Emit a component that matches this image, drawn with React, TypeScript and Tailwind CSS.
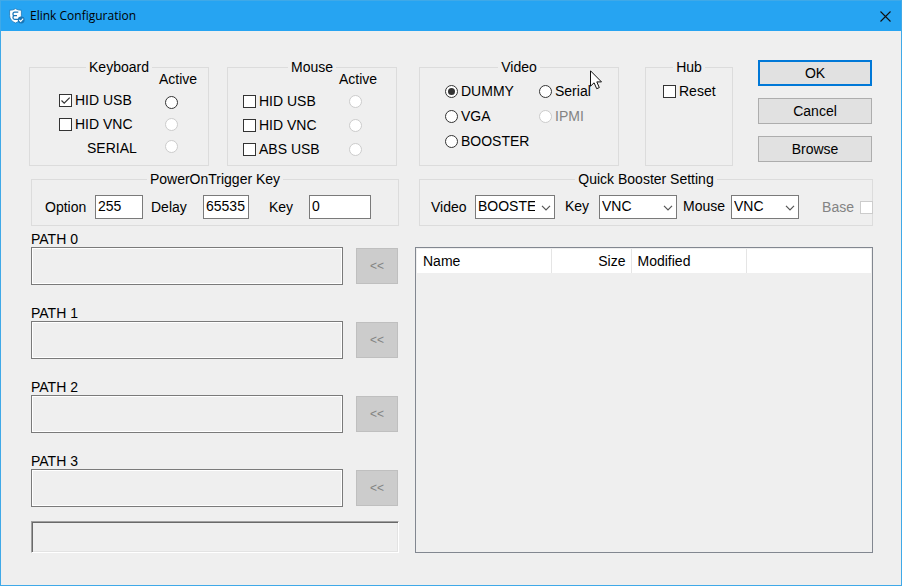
import { useId, type ReactNode } from "react";

const boxBase =
  "relative size-[13px] shrink-0 appearance-none border bg-white border-[#333333] disabled:border-[#cccccc]";

function Group({ title, className, children }: { title: string; className?: string; children: ReactNode }) {
  return (
    <fieldset className={`relative min-w-0 border border-[#dcdcdc] ${className ?? ""}`}>
      <legend className="mx-auto px-[3px] leading-[14px]">{title}</legend>
      {children}
    </fieldset>
  );
}

function Check({ label, checked, disabled }: { label: string; checked?: boolean; disabled?: boolean }) {
  return (
    <label className="flex h-4 items-center gap-[3px] whitespace-nowrap">
      <span className="relative flex">
        <input type="checkbox" defaultChecked={checked} disabled={disabled} className={`peer ${boxBase}`} />
        <svg
          viewBox="0 0 13 13"
          className="pointer-events-none absolute inset-0 hidden size-[13px] peer-checked:block"
          fill="none"
          stroke="#333"
          strokeWidth="1.2"
        >
          <path d="M2.5 6.5 5.2 9.2 10.7 3.7" />
        </svg>
      </span>
      <span>{label}</span>
    </label>
  );
}

function RadioDot({
  name,
  checked,
  disabled,
  label,
}: {
  name: string;
  checked?: boolean;
  disabled?: boolean;
  label?: string;
}) {
  return (
    <span className="relative flex">
      <input
        type="radio"
        name={name}
        aria-label={label}
        defaultChecked={checked}
        disabled={disabled}
        className={`peer rounded-full ${boxBase}`}
      />
      <span className="pointer-events-none absolute top-[3px] left-[3px] hidden size-[7px] rounded-full bg-[#333333] peer-checked:block" />
    </span>
  );
}

function Radio({ name, label, checked, disabled }: { name: string; label: string; checked?: boolean; disabled?: boolean }) {
  return (
    <label className={`flex h-4 items-center gap-[3px] whitespace-nowrap ${disabled ? "text-[#838383]" : ""}`}>
      <RadioDot name={name} checked={checked} disabled={disabled} />
      <span>{label}</span>
    </label>
  );
}

function Field({ label, value, labelClass, inputClass }: { label: string; value: string; labelClass: string; inputClass: string }) {
  const id = useId();
  return (
    <>
      <label htmlFor={id} className={`shrink-0 ${labelClass}`}>
        {label}
      </label>
      <input
        id={id}
        defaultValue={value}
        className={`h-6 shrink-0 border border-[#7a7a7a] bg-white pb-[2px] pl-[2px] outline-none ${inputClass}`}
      />
    </>
  );
}

function Combo({
  label,
  options,
  labelClass,
  boxClass,
}: {
  label: string;
  options: string[];
  labelClass: string;
  boxClass: string;
}) {
  const id = useId();
  return (
    <>
      <label htmlFor={id} className={`shrink-0 ${labelClass}`}>
        {label}
      </label>
      <span className={`relative flex h-6 shrink-0 ${boxClass}`}>
        <select
          id={id}
          className="h-6 w-full appearance-none overflow-hidden border border-[#7a7a7a] bg-white pr-[19px] pb-[2px] pl-[2px] outline-none"
        >
          {options.map((o) => (
            <option key={o}>{o}</option>
          ))}
        </select>
        <svg
          viewBox="0 0 10 6"
          className="pointer-events-none absolute top-[10px] right-1 h-[6px] w-[10px]"
          fill="none"
          stroke="#555"
          strokeWidth="1.2"
        >
          <path d="M1 0.8 5 4.8 9 0.8" />
        </svg>
      </span>
    </>
  );
}

function PathRow({ index }: { index: number }) {
  const id = useId();
  return (
    <div className="flex flex-col">
      <label htmlFor={id} className="leading-4">
        PATH {index}
      </label>
      <div className="flex items-center gap-[13px]">
        <input
          id={id}
          readOnly
          className="h-[38px] w-[312px] border border-[#7a7a7a] bg-[#efefef] px-1 shadow-[inset_0_0_0_1px_#ffffff] outline-none"
        />
        <button disabled className="h-9 w-[42px] border border-[#bfbfbf] bg-[#cccccc] text-[12px] text-[#838383]">
          &lt;&lt;
        </button>
      </div>
    </div>
  );
}

function Pointer() {
  return (
    <svg viewBox="0 0 12 20" className="pointer-events-none absolute -top-1 left-[170px] h-5 w-3">
      <path
        d="M0.5 0.8V16.2L4.1 12.8 6.7 18.7 9.3 17.6 6.8 11.9H11.5Z"
        fill="#fff"
        stroke="#111"
        strokeWidth="1"
        strokeLinejoin="round"
      />
    </svg>
  );
}

function AppIcon() {
  return (
    <svg viewBox="0 0 16 16" className="size-4">
      <path d="M6.5 0.6C8 1.7 10 2.2 12.4 2.2V7.5C12.4 11 10 13.6 6.5 15 3 13.6 0.6 11 0.6 7.5V2.2C3 2.2 5 1.7 6.5 0.6Z" fill="#fff" stroke="#1976b8" strokeWidth="0.8" />
      <path d="M9.3 4.2H5.6Q4 4.2 4 5.8V6.4Q4 7.7 5.4 7.7H8M5.4 7.7Q4 7.7 4 9.2V9.8Q4 11.3 5.6 11.3H9" fill="none" stroke="#1976b8" strokeWidth="1.3" />
      <circle cx="12.2" cy="12" r="3.4" fill="#1976b8" />
      <path d="M10.3 12 11.7 13.4 14.2 10.6" fill="none" stroke="#fff" strokeWidth="1.1" />
    </svg>
  );
}

export default function App() {
  return (
    <div className="flex min-h-screen flex-col border border-[#3fa9e8] bg-[#efefef] font-['Liberation_Sans',Arial,sans-serif] text-[14px] leading-4 text-black">
      <header className="flex h-[30px] items-center bg-[#26a4f2] pr-[10px] pl-2">
        <AppIcon />
        <h1 className="ml-[5px] flex-1 font-['Open_Sans','Noto_Sans',sans-serif] text-[12px] leading-4">Elink Configuration</h1>
        <button aria-label="Close">
          <svg viewBox="0 0 11 11" className="size-[11px]" stroke="#111" strokeWidth="1.1">
            <path d="M0.5 0.5 10.5 10.5M10.5 0.5 0.5 10.5" />
          </svg>
        </button>
      </header>

      <main className="flex gap-[14px] px-7 pt-[29px] pb-8">
        <div className="flex w-[372px] shrink-0 flex-col">
          <div className="flex h-[106px] gap-[18px]">
            <Group title="Keyboard" className="w-[180px]">
              <div className="-mt-[3px] flex pl-[29px]">
                <div className="flex w-[100px] flex-col gap-2 pt-[21px]">
                  <Check label="HID USB" checked />
                  <Check label="HID VNC" />
                  <span className="pl-7">SERIAL</span>
                </div>
                <div className="flex flex-col">
                  <span>Active</span>
                  <div className="flex flex-col gap-[9px] pt-[9px] pl-[6px]">
                    <RadioDot name="keyboard" label="HID USB active" />
                    <RadioDot name="keyboard" label="HID VNC active" disabled />
                    <RadioDot name="keyboard" label="SERIAL active" disabled />
                  </div>
                </div>
              </div>
            </Group>
            <Group title="Mouse" className="w-[170px]">
              <div className="-mt-[3px] flex pl-[15px]">
                <div className="flex w-24 flex-col gap-2 pt-[22px]">
                  <Check label="HID USB" />
                  <Check label="HID VNC" />
                  <Check label="ABS USB" />
                </div>
                <div className="flex flex-col">
                  <span>Active</span>
                  <div className="flex flex-col gap-[11px] pt-2 pl-[10px]">
                    <RadioDot name="mouse" label="HID USB active" disabled />
                    <RadioDot name="mouse" label="HID VNC active" disabled />
                    <RadioDot name="mouse" label="ABS USB active" disabled />
                  </div>
                </div>
              </div>
            </Group>
          </div>

          <div className="flex flex-col pr-[2px] pl-[2px]">
            <Group title="PowerOnTrigger Key" className="mt-[6px]">
              <div className="flex items-center pt-[9px] pb-[6px] pl-[13px]">
                <Field label="Option" value="255" labelClass="w-[50px]" inputClass="w-12" />
                <Field label="Delay" value="65535" labelClass="ml-2 w-[52px]" inputClass="w-[46px]" />
                <Field label="Key" value="0" labelClass="ml-5 w-10" inputClass="w-[62px]" />
              </div>
            </Group>
            <div className="mt-[5px] flex flex-col gap-5">
              {[0, 1, 2, 3].map((i) => (
                <PathRow key={i} index={i} />
              ))}
            </div>
            <output
              aria-label="Status"
              className="mt-[14px] block h-8 border border-t-[#a0a0a0] border-r-white border-b-white border-l-[#a0a0a0] shadow-[inset_1px_1px_0_#696969,inset_-1px_-1px_0_#e3e3e3]"
            />
          </div>
        </div>

        <div className="flex min-w-0 flex-1 flex-col">
          <div className="flex h-[106px] pl-1">
            <Group title="Video" className="w-[200px]">
              <div className="grid grid-cols-[94px_auto] gap-y-[9px] pt-[9px] pl-[25px]">
                <Radio name="video" label="DUMMY" checked />
                <Radio name="video" label="Serial" />
                <Radio name="video" label="VGA" />
                <Radio name="video" label="IPMI" disabled />
                <Radio name="video" label="BOOSTER" />
              </div>
              <Pointer />
            </Group>
            <Group title="Hub" className="ml-[26px] w-[88px]">
              <div className="pt-[9px] pl-[17px]">
                <Check label="Reset" />
              </div>
            </Group>
            <div className="ml-[25px] flex w-[114px] flex-col gap-3">
              <button className="h-[26px] border-2 border-[#0078d7] bg-[#e1e1e1]">OK</button>
              <button className="h-[26px] border border-[#adadad] bg-[#e1e1e1]">Cancel</button>
              <button className="h-[26px] border border-[#adadad] bg-[#e1e1e1]">Browse</button>
            </div>
          </div>

          <Group title="Quick Booster Setting" className="mt-[6px] ml-1">
            <div className="flex items-center pt-[9px] pb-[6px] pl-[11px]">
              <Combo label="Video" options={["BOOSTER", "DUMMY", "VGA"]} labelClass="w-11" boxClass="w-20" />
              <Combo label="Key" options={["VNC", "USB"]} labelClass="ml-[10px] w-[34px] pb-[3px]" boxClass="w-[78px]" />
              <Combo label="Mouse" options={["VNC", "USB"]} labelClass="ml-[6px] w-12 pb-[3px]" boxClass="w-[68px]" />
              <label className="-mr-px ml-auto flex items-center gap-[6px] text-[#838383]">
                Base
                <input type="checkbox" disabled className={boxBase} />
              </label>
            </div>
          </Group>

          <div className="mt-[21px] flex-1 border border-[#828790] p-px">
            <table className="w-full table-fixed border-collapse">
              <thead>
                <tr className="h-6 bg-white text-left">
                  <th className="w-[134px] border-r border-[#e5e5e5] px-[6px] font-normal">Name</th>
                  <th className="w-20 border-r border-[#e5e5e5] px-[5px] text-right font-normal">Size</th>
                  <th className="w-[115px] border-r border-[#e5e5e5] px-[6px] font-normal">Modified</th>
                  <td />
                </tr>
              </thead>
            </table>
          </div>
        </div>
      </main>
    </div>
  );
}
